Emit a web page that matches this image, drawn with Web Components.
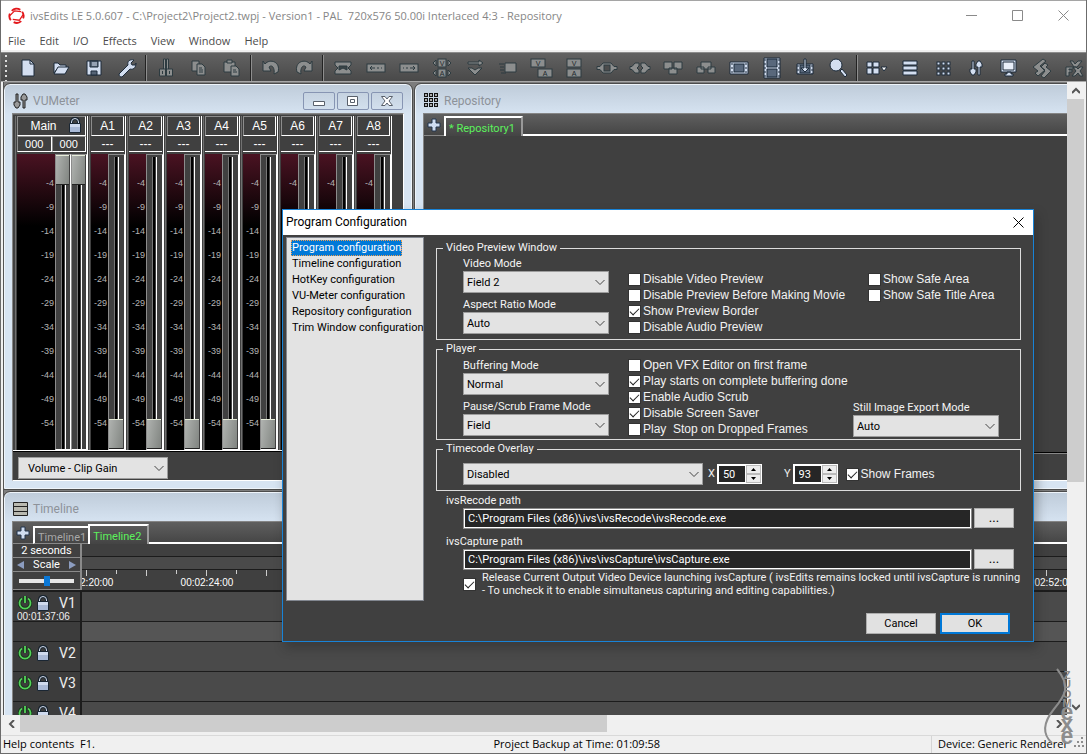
<!DOCTYPE html>
<html lang="en">
<head>
<meta charset="utf-8">
<title>ivsEdits LE</title>
<style>
html,body{margin:0;height:100%;overflow:hidden;background:#f0f0f0}
body{font:11px/16px "Open Sans",sans-serif;color:#000}
</style>
</head>
<body>
<edit-app></edit-app>
<script>
const define = (name, css, html, setup) => customElements.define(name, class extends HTMLElement {
  connectedCallback() {
    if (this.shadowRoot) return;
    const root = this.attachShadow({mode: 'open'});
    const t = document.createElement('template');
    t.innerHTML = `<style>*{box-sizing:border-box}${css}</style>` + (typeof html === 'function' ? html(this) : html);
    root.append(t.content.cloneNode(true));
    if (setup) setup(this, root);
  }
});

/* Toolbar glyphs, drawn round the origin in a 28px box */
const strip = (w, h, body) => `<rect x="${-w/2}" y="${-h/2}" width="${w}" height="${h}"/>${body}`;
const letterBox = (x, y, c) => `<rect x="${x}" y="${y}" width="14" height="8"/><text x="${x+7}" y="${y+7}">${c}</text>`;
const ICONS = {
  new: '<path d="M-6-8H2L6-4V8H-6Z"/><path d="M2-8V-4H6" fill="none"/>',
  open: '<path d="M-7 5V-5H-3L-1-3H5V0H-3Z"/><path d="M-7 6L-3-1H8L4 6Z"/>',
  save: '<path d="M-7-7H7V7H-7Z"/><path d="M-4-7H4V-1H-4ZM-3 3H3V7H-3Z" fill="#566476"/><path d="M-2-5H3M-2-3H3" stroke="#d5dff0"/>',
  wrench: '<path d="M-8 6L1-3C0-7 3-9 7-8L4-5L5-3L8-3L9-5C9 0 6 2 3 1L-5 9C-7 9-8 8-8 6Z"/>',
  cut: '<path d="M-2.500-9H-.5V2H-2.500ZM.5-9H2.500V2H.5Z"/><path d="M-6.500 1H-.5V8H-6.500ZM.5 1H6.500V8H.5ZM-3.500 3V6M3.500 3V6"/>',
  copy: '<path d="M-7-7H0V3H-7Z"/><path d="M-2-4H3L6-1V7H-2Z"/><path d="M0 0H3M0 2H4M0 4H4"/>',
  paste: '<path d="M-8-6H3V4H-8Z"/><path d="M-5-8H0V-5H-5Z"/><path d="M-1-2H4L7 1V8H-1Z"/><path d="M1 2H4M1 4H5"/>',
  undo: '<path d="M-8-7L-6-4C-1-10 10-6 7 4L3 6C4 0 1-4-2-1L0 3H-8Z"/>',
  redo: '<path d="M8-7L6-4C1-10-10-6-7 4L-3 6C-4 0-1-4 2-1L0 3H8Z"/>',
  clip: '<path d="M-8-6H8V-3L5 0L8 3V6H-8V3L-5 0L-8-3Z"/><path d="M-4-2H4V2L0 0L-4 2Z" fill="#3b4447"/>',
  left: strip(18, 8, '<path d="M-4-2L-6 0L-4 2M-6 0H-1M1 0H3M5 0H6"/>'),
  right: strip(18, 8, '<path d="M4-2L6 0L4 2M6 0H1M-1 0H-3M-5 0H-6"/>'),
  vaSwap: '<rect x="-4" y="-9" width="8" height="8"/><rect x="-4" y="1" width="8" height="8"/><text y="-2">V</text><text y="8">A</text><path d="M-6-8V-2L-9-5ZM6-8V-2L9-5ZM-6 2V8L-9 5ZM6 2V8L9 5Z"/>',
  down: '<path d="M-7-6H4V-8L8-5L4-2V-4H-7Z"/><path d="M-7 0H-3L0 2L3 0H7L0 7Z"/>',
  hand: '<path d="M-3-5H8V4H-3Z"/><path d="M-9-4H-4M-8-1H-4M-8 2H-4M-7 5H-2"/>',
  vaStep: letterBox(-10, -9, 'V') + letterBox(-3, 1, 'A'),
  vaStack: letterBox(-7, -9, 'V') + letterBox(-7, 1, 'A'),
  join: '<path d="M-10-1.500H-7L-4-5H4L7-1.500H10V1.500H7L4 5H-4L-7 1.500H-10Z"/><rect x="-3" y="-3" width="6" height="6" fill="#4c4c4c"/>',
  split: '<path d="M-10-1.500H-8L-5-5H-1V-2L-3 0L-1 2V5H-5L-8 1.500H-10ZM10-1.500H8L5-5H1V-2L3 0L1 2V5H5L8 1.500H10Z"/>',
  low: '<path d="M-9-6H-1V1H-9ZM1-6H9V1H1ZM-4 0H4V6H-4Z"/>',
  high: '<path d="M-9-1H-2V5H-9ZM2-1H9V5H2ZM-5-6H5V1H-5Z"/>',
  film: '<path d="M-9-6H9V6H-9Z"/><rect x="-5" y="-4" width="10" height="8" fill="#59687c"/><path d="M-7-5V6M7-5V6" stroke-dasharray="2 2"/>',
  film2: '<path d="M-8-10H8V10H-8Z"/><path d="M-5-9H5V-1H-5ZM-5 1H5V9H-5Z" fill="#59687c"/><path d="M-7-9V10M7-9V10" stroke-dasharray="2 2"/>',
  import: '<path d="M-8-4H8V6H-8Z"/><rect x="-5" y="-3" width="10" height="8" fill="#59687c"/><path d="M-7-3V6M7-3V6" stroke-dasharray="2 2"/><path d="M-1-9H1V0H4L0 4L-4 0H-1Z"/>',
  zoom: '<path d="M2 3L4 1L9 7L7 9Z"/><circle cx="-2" cy="-3" r="6"/>',
  grid4: '<path d="M-10-6H-5V-1H-10ZM-4-6H2V-1H-4ZM-10 0H-5V6H-10ZM-4 0H2V6H-4Z"/><path d="M4-1H10L7 3Z" fill="#fff"/>',
  rows: '<path d="M-7-7H7V-3H-7ZM-7-2H7V2H-7ZM-7 3H7V7H-7Z"/>',
  dots: [-6,-1,4].map(y => [-6,-1,4].map(x => `<rect x="${x}" y="${y}" width="3" height="3"/>`).join('')).join(''),
  mixer: '<path d="M-4-7H-2V1H0V4L-2 7H-4L-6 4V1H-4ZM2 7H4V-1H6V-4L4-7H2L0-4V-1H2Z"/>',
  monitor: '<path d="M-8-8H7V4H-8ZM-2 4H2V6H4V8H-4V6H-2Z"/><path d="M-6-6H5V2H-6Z" fill="#e9effa"/>',
  loop: '<path d="M1-9L-9-1L-4 3L-7 5L-4 8L3 2L-2-2L4-7ZM3-5L-1-1L3 3L-1 8L2 10L9 3L4-1L6-3Z"/>',
  vfx: '<path d="M-5-7H-2L0-4L3-7H7L2-1H-1ZM-9-1H-2V1H-6V2H-3V4H-6V8H-9ZM-2-1H1L3 1L5-1H8L5 3L8 8H5L3 5L0 8H-3L1 3Z"/>'
};
define('tool-icon', `
:host{display:block;width:33px;height:28px;flex:none}
button{all:unset;display:block;width:33px;height:28px}
svg{display:block;margin:auto;overflow:visible}
g{fill:#d3def0;stroke:#1d2b3a;stroke-width:1}
:host([off]) g{fill:#8c8e8e;stroke:#2d3b40}
text{font:7px "Liberation Sans",sans-serif;text-anchor:middle;stroke:none;fill:#20282b}`,
el => `<button type="button" aria-label="${el.getAttribute('name')}"><svg width="28" height="28" viewBox="-14 -15 28 28" aria-hidden="true"><g>${ICONS[el.getAttribute('name')]}</g></svg></button>`);

define('title-bar', `
:host{display:flex;align-items:center;height:29px;padding-left:7px;background:#fff;color:#868686}
.logo{margin-right:5px;flex:none}
h1{font:inherit;margin:0;white-space:pre;flex:1}
.sys{display:flex}
.sys button{all:unset;width:46px;height:28px;display:flex;align-items:center;justify-content:center}
.sys path{fill:none;stroke:#8a8a8a}`,
`<svg class="logo" width="17" height="17" viewBox="-9 -9 18 18" fill="none" stroke="#e3171b" stroke-width="2">
<path d="M-5-5A7 7 0 0 1 4-6M6-4A7 7 0 0 1 7 3M5 6A7 7 0 0 1-3 7M-6 5A7 7 0 0 1-7-2"/><path d="M-7 0L-2-5L5-4M7-1L3 5L-4 4" stroke-width="1.3"/></svg>
<h1><slot></slot></h1>
<div class="sys"><button aria-label="Minimize"><svg width="11" height="11"><path d="M0 5.500H11"/></svg></button>
<button aria-label="Maximize"><svg width="11" height="11"><path d="M.5 .5H10.500V10.500H.5Z"/></svg></button>
<button aria-label="Close"><svg width="11" height="11"><path d="M.5 .5L10.500 10.500M10.500 .5L.5 10.500"/></svg></button></div>`);

define('menu-bar', `
:host{display:block;height:20px;background:#fff;color:#4c4c4c}
nav{display:flex;gap:14px;padding:2px 7px 0}
a{color:inherit;text-decoration:none;line-height:18px}`,
`<nav>${['File','Edit','I/O','Effects','View','Window','Help'].map(m => `<a href="#">${m}</a>`).join('')}</nav>`);

const group = (list, off) => list.split(' ').map(n => `<tool-icon name="${n}"${off ? ' off' : ''}></tool-icon>`).join('');
define('tool-bar', `
:host{display:flex;height:29px;padding-left:4px;overflow:hidden;border-bottom:1px solid #a8a8a8;background:linear-gradient(#626262,#494949)}
.grip{width:2px;margin:2px 4px 0 0;flex:none;background:repeating-linear-gradient(#ddd 0 2px,transparent 2px 5px)}
hr{flex:none;width:2px;height:26px;margin:2px 2px 0 2px;border:0;border-left:1px solid #222;background:#8e8e8e}`,
`<span class="grip"></span>${group('new open save wrench')}<hr>${group('cut copy paste', 1)}<hr>${group('undo redo', 1)}<hr>${group('clip left right vaSwap down hand vaStep vaStack join split low high', 1)}${group('film film2 import zoom')}<hr>${group('grid4 rows dots mixer monitor')}${group('loop vfx', 1)}`);

define('mdi-window', `
:host{display:flex;flex-direction:column;min-width:0;min-height:0;border:1px solid #eef4fa;outline:1px solid #4c4c4c;border-radius:6px 6px 0 0;padding:0 7px 7px;background:linear-gradient(#bfccda,#d7e4f2 30px)}
header{display:flex;align-items:center;height:28px;flex:none;padding:3px 1px 0 1px;color:#8d9299;font:12px/16px Roboto,sans-serif}
h2{font:inherit;margin:0 0 0 5px;flex:1}
.body{flex:1;display:flex;flex-direction:column;min-height:0;border:1px solid #858585;border-right-color:#fff;border-bottom-color:#fff;background:#404040;color:#fff;overflow:hidden}`,
`<header><slot name="icon"></slot><h2><slot name="title"></slot></h2><slot name="controls"></slot></header><div class="body"><slot></slot></div>`);

define('window-controls', `
:host{display:flex;gap:2px}
button{all:unset;width:30px;height:16px;border:1px solid #8795b3;border-radius:2px;display:flex;align-items:center;justify-content:center}
svg{display:block;fill:#fff;stroke:#59606b}`,
`<button aria-label="Minimize"><svg width="12" height="12"><path d="M.5 6.500H11.500V10.500H.5Z"/></svg></button>
<button aria-label="Restore"><svg width="12" height="12"><path d="M.5 1.500H10.500V10.500H.5Z"/><path d="M3.500 4.500H7.500V7.500H3.500Z"/></svg></button>
<button aria-label="Close"><svg width="12" height="12"><path d="M.5 1.500H4L6 4L8 1.500H11.500L8 6L11.500 10.500H8L6 8L4 10.500H.5L4 6Z"/></svg></button>`);

const LOCK = '<svg width="14" height="16" viewBox="0 0 14 16"><path d="M3.500 8V5Q3.500 1.500 7 1.500T10.500 5V8" fill="none" stroke="#16222e" stroke-width="3"/><path d="M3.500 7V5Q3.500 1.500 7 1.500T10.500 5V7" fill="none" stroke="#d5dff0"/><path d="M1.500 6.500H12.500V15.500H1.500Z" fill="#a9b9d6" stroke="#1a2633"/><path d="M2 7H12V10H2Z" fill="#cfdaee"/></svg>';

define('vu-fader', `
:host{display:flex;flex-direction:column;position:relative;flex:1;border:1px solid #8c8c8c;border-right-color:#fff;border-bottom-color:#fff;background:#404040}
.slot{flex:1;width:5px;margin:2px auto 0;border-left:1px solid #777;background:linear-gradient(90deg,#000 2px,#404040 2px 3px,#fff 3px)}
.cap{position:absolute;left:0;right:1px;height:30px;top:0;border-top:1px solid #e6ecd8;border-bottom:1px solid #222;background:linear-gradient(100deg,#b0b3b0,#808480)}
:host([low]) .cap{top:auto;bottom:0}`,
`<span class="slot"></span><span class="cap"></span>`);

define('vu-channel', `
:host{display:flex;flex-direction:column;width:37px;flex:none;padding-left:1px;border-left:1px solid #707070;border-right:1px solid #fff;font:12px/18px "Liberation Sans",sans-serif}
:host([main]){width:73px}
.name{display:flex;height:20px;border:1px solid #8c8c8c;border-right-color:#fff;border-bottom-color:#fff;justify-content:center;margin-right:1px}
.name svg{margin:0 -4px 0 11px}
:host([main]) .name{padding-left:5px}
.vals{display:flex;height:16px;margin-right:1px;line-height:16px}
.vals span{flex:1;text-align:center;border-bottom:1px solid #fff}
:host([main]) .vals span{border:1px solid #8c8c8c;border-right-color:#fff;border-bottom-color:#fff;line-height:14px;font-size:11px}
.meter{display:flex;flex:1;margin-top:2px;background:linear-gradient(#4a1322,#000 72px)}
ol{list-style:none;margin:0;padding:17px 1px 0 0;width:17px;flex:none;font:9px/24px "Liberation Sans",sans-serif;color:#b4b4b4;white-space:nowrap}
:host([main]) ol{width:38px}
li{display:flex;justify-content:flex-end}`,
el => {
  const main = el.hasAttribute('main');
  const scale = Array.from({length: +(el.getAttribute('marks') || 11)}, (_, i) => `<li>-${4 + i * 5}</li>`).join('');
  return `<div class="name">${el.getAttribute('label')}${main ? LOCK : ''}</div>
<div class="vals">${main ? '<span>000</span><span>000</span>' : '<span>---</span>'}</div>
<div class="meter"><ol>${scale}</ol>${main ? '<vu-fader></vu-fader><vu-fader></vu-fader>' : '<vu-fader low></vu-fader>'}</div>`;
});

define('combo-box', `
:host{display:block;position:relative;font:11px/15px Roboto,sans-serif}
label{display:block;height:15px;color:#f4f4f4}
.box{position:relative}
select{appearance:none;display:block;width:100%;height:22px;margin:0;padding:0 3px;border:1px solid #9d9d9d;border-radius:0;background:#e3e3e3;color:#000;font:inherit}
:host([wide]) select{padding:0 9px}
svg{position:absolute;right:4px;top:8px;fill:none;stroke:#444;pointer-events:none}`,
el => {
  const l = el.getAttribute('label');
  return `${l ? `<label for="s">${l}</label>` : ''}<div class="box"><select id="s" aria-label="${l || el.getAttribute('hint')}"><option>${el.getAttribute('value')}</option></select><svg width="10" height="7"><path d="M.5 1L5 5.500L9.500 1"/></svg></div>`;
});

define('vu-panel', `
:host{display:flex;flex-direction:column;flex:1}
.channels{display:flex;gap:1px;flex:1;padding:1px 0 0 2px;border-top:1px solid #606060;border-bottom:1px solid #fff}
footer{border-top:1px solid #000;padding:5px 5px 1px}
combo-box{width:150px}`,
`<div class="channels"><vu-channel main label="Main"></vu-channel>${[1,2,3,4,5,6,7,8].map(n => `<vu-channel label="A${n}" marks="${n > 5 ? 1 : 11}"></vu-channel>`).join('')}</div>
<footer><combo-box wide hint="Control mode" value="Volume - Clip Gain"></combo-box></footer>`);

const PLUS = '<svg width="14" height="14"><path d="M5 1H9V5H13V9H9V13H5V9H1V5H5Z" fill="#cfdcf0" stroke="#22344c"/></svg>';
define('tab-strip', `
:host{display:flex;height:22px;flex:none;background:linear-gradient(#5f5f5f,#444)}
.add{all:unset;width:20px;display:flex;align-items:center;justify-content:center;border-bottom:1px solid #888}
.tabs{display:flex;align-items:flex-end;flex:none}
.tabs button{all:unset;box-sizing:border-box;height:18px;padding:2px 2px 0 3px;border:2px solid #fff;border-right:0;border-bottom:1px solid #888;color:#a8a8a8;font:11px/15px Roboto,sans-serif}
.tabs button.on{height:20px;color:#5cf25c;border-right:2px solid #999;padding-right:6px;padding-left:3px;border-bottom:0}
.rest{flex:1;border-bottom:2px solid #fff}
svg{display:block}`,
el => `<button class="add" aria-label="Add tab">${PLUS}</button><div class="tabs">${el.getAttribute('tabs').split('|').map((t, i, a) => `<button class="${i === a.length - 1 ? 'on' : ''}">${t}</button>`).join('')}</div><span class="rest"></span>`);

define('repository-panel', `
:host{display:flex;flex-direction:column;flex:1}
.items{flex:1;border-bottom:1px solid #000}
.foot{height:27px;border-top:1px solid #888}`,
`<tab-strip tabs="* Repository1"></tab-strip><div class="items"></div><div class="foot"></div>`);

define('track-row', `
:host{display:flex;flex:none;height:30px}
.head{display:grid;grid-template-columns:20px 16px 1fr;align-content:start;align-items:center;width:69px;flex:none;padding:2px 0 0 2px;background:#3c3c3c;border-right:2px solid #1c1c1c;border-bottom:1px solid #1c1c1c}
.lane{flex:1;background:#4a4a4a;border-bottom:1px solid #1c1c1c}
.head svg{display:block;margin:auto}
b{font:14px/18px Roboto,sans-serif;padding-left:8px;color:#eee}
time{grid-column:1/4;font:10px/10px "Liberation Sans",sans-serif;margin-left:2px;color:#eee;white-space:nowrap}
:host([sub]) .head svg,:host([sub]) b{display:none}
:host([sub]){height:20px}
:host([sub]) .lane{background:#555}`,
el => `<div class="head"><svg width="14" height="16" viewBox="0 0 14 16" fill="none" stroke="#16361a" stroke-width="3.500"><path d="M4 3.500A5.500 5.500 0 1 0 10 3.500M7 1V8"/><path d="M4 3.500A5.500 5.500 0 1 0 10 3.500M7 1V8" stroke="#55d35a" stroke-width="1.800"/></svg>${LOCK}<b>${el.getAttribute('name') || ''}</b>${el.hasAttribute('time') ? `<time>${el.getAttribute('time')}</time>` : ''}</div><div class="lane"></div>`);

define('time-line', `
:host{display:flex;flex-direction:column;flex:1;overflow:hidden}
.top{display:flex;flex:none;height:48px;border-bottom:2px solid #1c1c1c}
.scale{width:69px;flex:none;border-right:2px solid #8a8a8a;text-align:center;font:11px/13px Roboto,sans-serif}
.scale>*{border-bottom:1px solid #8a8a8a}
.step{display:flex;justify-content:space-between;align-items:center;height:14px;padding:0 3px}
.step button{all:unset;display:flex}
.track{height:18px;display:flex;align-items:center;padding:0 6px}
input{appearance:none;width:100%;height:4px;margin:0;background:#e7e7e7}
input::-webkit-slider-thumb{appearance:none;width:6px;height:10px;background:#0a78d7}
.ruler{flex:1;overflow:hidden;display:flex;flex-direction:column}
.bar{height:13px;flex:none;border-bottom:1px solid #1c1c1c}
.bar.b{background:#4a4a4a}
.times{display:flex;flex:1;margin-left:-55px;font:10px/12px "Liberation Sans",sans-serif}
.times span{width:120px;flex:none;text-align:center;padding-top:7px;background:linear-gradient(#ccc,#ccc) 59px 0/1px 6px no-repeat,linear-gradient(#ccc,#ccc) 89px 0/1px 4px no-repeat,linear-gradient(#ccc,#ccc) 119px 0/1px 6px no-repeat,linear-gradient(#ccc,#ccc) 29px 0/1px 4px no-repeat}`,
`<tab-strip tabs="Timeline1|Timeline2"></tab-strip>
<div class="top"><div class="scale"><div>2 seconds</div><div class="step"><button aria-label="Zoom out"><svg width="9" height="10"><path d="M8 1V9L1 5Z" fill="#8c9dc0"/></svg></button>Scale<button aria-label="Zoom in"><svg width="9" height="10"><path d="M1 1V9L8 5Z" fill="#8c9dc0"/></svg></button></div>
<div class="track"><input type="range" aria-label="Scale" value="50"></div></div>
<div class="ruler"><div class="bar"></div><div class="bar b"></div><div class="times">${['00:02:20:00','00:02:24:00','','','','','','','00:02:52:00'].map(s => `<span>${s}</span>`).join('')}</div></div></div>
<track-row name="V1" time="00:01:37:06"></track-row><track-row sub></track-row><track-row name="V2"></track-row><track-row name="V3"></track-row><track-row name="V4"></track-row>`);

define('scroll-bar', `
:host{display:flex;background:#f0f0f0;width:17px;flex-direction:column}
:host([horizontal]){width:auto;height:17px;flex-direction:row}
button{all:unset;width:17px;height:17px;flex:none;display:flex;align-items:center;justify-content:center}
svg{fill:none;stroke:#555;stroke-width:2}
.track{flex:1;display:flex;flex-direction:inherit}
.thumb{background:#cdcdcd}`,
el => {
  const h = el.hasAttribute('horizontal');
  const a = h ? ['M6 0L2 4L6 8', 'M2 0L6 4L2 8'] : ['M0 6L4 2L8 6', 'M0 2L4 6L8 2'];
  return `<button aria-label="Back"><svg width="8" height="8"><path d="${a[0]}"/></svg></button><div class="track"><div class="thumb" style="flex-basis:${el.getAttribute('size')}%"></div></div><button aria-label="Forward"><svg width="8" height="8"><path d="${a[1]}"/></svg></button>`;
});

define('status-bar', `
:host{display:flex;height:18px;border-top:1px solid #d9d9d9;background:#f0f0f0;line-height:16px;white-space:pre}
span{padding-left:2px}
.a{flex:490}.b{flex:439;border-right:1px solid #d5d5d5}.c{flex:0 0 154px;padding-left:6px}`,
`<span class="a">Help contents  F1.</span><span class="b">Project Backup at Time: 01:09:58</span><span class="c">Device: Generic Renderer</span>`);

define('water-mark', `
:host{position:absolute;right:2px;bottom:4px;width:40px;height:80px;pointer-events:none}
svg{display:block;overflow:visible}
path{fill:none;stroke:#8d8d8d;stroke-width:2}
text{font:bold 11px "Liberation Sans",sans-serif;fill:#8d8d8d;text-anchor:middle}
.mid{font-size:23px;font-weight:bold}`,
`<svg width="40" height="80" viewBox="0 0 40 80"><path d="M13 0C28 18 20 28 10 40C-2 55-1 66 8 74"/><path d="M30 77h10M33 73h7M37 69h3" stroke-dasharray="2 2"/>
<text x="23" y="10">Z</text><text x="23" y="19">U</text><text x="23" y="29">O</text><text x="23" y="38">M</text>
<text class="mid" x="23" y="51">e</text><text class="mid" x="23" y="63">x</text><text class="mid" x="23" y="75">e</text></svg>`);

define('check-box', `
:host{display:block}
label{display:flex;align-items:center;gap:2px;height:16px;font:12px/16px "Liberation Sans",sans-serif;color:#f2f2f2;white-space:pre}
input{appearance:none;width:13px;height:13px;margin:0;flex:none;background:#fff;border:1px solid #333;display:grid;place-items:center}
input:checked::before{content:"";width:8px;height:4px;margin-top:-2px;border-left:1px solid #222;border-bottom:1px solid #222;transform:rotate(-45deg)}
:host([note]) label{height:26px;gap:6px;font:11px/13px Roboto,sans-serif}`,
el => `<label><input type="checkbox"${el.hasAttribute('checked') ? ' checked' : ''}><span><slot></slot></span></label>`);

define('group-box', `
:host{display:block}
fieldset{margin:0;padding:0;border:1px solid #dcdcdc;min-width:0}
legend{margin-left:6px;padding:0 3px;height:14px;font:11px/14px Roboto,sans-serif;color:#f4f4f4}`,
el => `<fieldset><legend>${el.getAttribute('label')}</legend><slot></slot></fieldset>`);

define('spin-box', `
:host{display:flex;font:11px/15px Roboto,sans-serif}
label{color:#eee;margin-right:2px;line-height:20px}
input{width:28px;height:20px;margin:0;padding:0 4px;border:2px solid #fff;border-right:0;background:#262626;color:#fff;font:inherit}
.arrows{display:flex;flex-direction:column;width:17px;height:20px;background:#ededed;border:1px solid #fff}
button{all:unset;flex:1;display:grid;place-items:center;border:1px solid #bbb}
svg{display:block}`,
el => `<label for="v">${el.getAttribute('label')}</label><input id="v" value="${el.getAttribute('value')}"><span class="arrows"><button aria-label="Up"><svg width="5" height="3"><path d="M0 3L2.500 0L5 3Z"/></svg></button><button aria-label="Down"><svg width="5" height="3"><path d="M0 0L2.500 3L5 0Z"/></svg></button></span>`);

define('path-field', `
:host{display:block;font:11px/15px Roboto,sans-serif}
label{display:block;margin-left:10px;color:#f4f4f4}
.row{display:flex;gap:2px;padding:0 7px 0 27px}
input{flex:1;min-width:0;height:21px;margin:0;padding:0 4px;border:1px solid #8a8a8a;box-shadow:inset 0 0 0 1px #fff;background:#262626;color:#fff;font:inherit}
button{width:40px;height:20px;margin:0;padding:0;border:1px solid #adadad;background:#e1e1e1;font:13px/16px Roboto,sans-serif;color:#000}`,
el => `<label for="p">${el.getAttribute('label')}</label><div class="row"><input id="p" value="${el.getAttribute('value')}"><button aria-label="Browse">...</button></div>`);

define('config-dialog', `
:host{position:absolute;left:281px;top:209px;width:752px;display:flex;flex-direction:column;border:1px solid #1883d7;background:#404040;box-shadow:3px 6px 10px rgba(30,30,30,.35)}
header{display:flex;align-items:center;height:25px;background:#fff;padding:0 9px 1px 3px}
h2{font:12px/16px Roboto,sans-serif;margin:0;flex:1}
header button{all:unset;display:flex}
.body{display:flex;gap:12px;padding:2px 12px 7px 3px}
ul{list-style:none;margin:0;padding:2px 4px;width:138px;height:364px;flex:none;border:1px solid #828790;background:#e3e3e3;font:11px/16px Roboto,sans-serif;white-space:nowrap}
li span{padding:1px 1px}
li.on span{display:inline-block;padding:0;line-height:14px;border:1px dotted #f0a050;background:#0078d7;color:#fff}
main{flex:1;min-width:0;padding-top:4px;display:flex;flex-direction:column;gap:2px}
.g{display:grid;column-gap:19px;padding:1px 0 4px 26px}
.g.p{grid-template-columns:146px 206px 146px;padding-bottom:2px}
.g.v{grid-template-columns:146px 221px 1fr}
.combos{display:grid;gap:4px;align-content:start}
.p .combos{padding-top:1px}
.v .checks{padding-top:15px}
.end{align-self:end}
.t{display:flex;align-items:center;padding:7px 0 5px 26px}
.t combo-box{width:240px;margin-right:5px}
.t spin-box{margin-right:22px}
.t spin-box+spin-box{margin-right:8px}
.paths{display:grid;gap:5px}
.note{margin:-1px 0 0 27px}
.buttons{display:flex;justify-content:flex-end;gap:4px;padding:14px 11px 0 0}
.buttons button{width:70px;height:21px;margin:0;padding:0;border:1px solid #adadad;background:#e1e1e1;color:#000;font:11px/16px Roboto,sans-serif}
.buttons .ok{border:2px solid #0078d7}`,
`<header><h2>Program Configuration</h2><button aria-label="Close"><svg width="11" height="11" fill="none" stroke="#000"><path d="M.5 .5L10.500 10.500M10.500 .5L.5 10.500"/></svg></button></header>
<div class="body"><ul>${['Program','Timeline','HotKey','VU-Meter','Repository','Trim Window'].map((n, i) => `<li class="${i ? '' : 'on'}"><span>${n} configuration</span></li>`).join('')}</ul>
<main>
<group-box label="Video Preview Window"><div class="g v"><div class="combos"><combo-box label="Video Mode" value="Field 2"></combo-box><combo-box label="Aspect Ratio Mode" value="Auto"></combo-box></div>
<div class="checks"><check-box>Disable Video Preview</check-box><check-box>Disable Preview Before Making Movie</check-box><check-box checked>Show Preview Border</check-box><check-box>Disable Audio Preview</check-box></div>
<div class="checks"><check-box>Show Safe Area</check-box><check-box>Show Safe Title Area</check-box></div></div></group-box>
<group-box label="Player"><div class="g p"><div class="combos"><combo-box label="Buffering Mode" value="Normal"></combo-box><combo-box label="Pause/Scrub Frame Mode" value="Field"></combo-box></div>
<div class="checks"><check-box>Open VFX Editor on first frame</check-box><check-box checked>Play starts on complete buffering done</check-box><check-box checked>Enable Audio Scrub</check-box><check-box checked>Disable Screen Saver</check-box><check-box>Play  Stop on Dropped Frames</check-box></div>
<combo-box class="end" label="Still Image Export Mode" value="Auto"></combo-box></div></group-box>
<group-box label="Timecode Overlay"><div class="t"><combo-box hint="Timecode overlay" value="Disabled"></combo-box><spin-box label="X" value="50"></spin-box><spin-box label="Y" value="93"></spin-box><check-box checked>Show Frames</check-box></div></group-box>
<div class="paths"><path-field label="ivsRecode path" value="C:\\Program Files (x86)\\ivs\\ivsRecode\\ivsRecode.exe"></path-field><path-field label="ivsCapture path" value="C:\\Program Files (x86)\\ivs\\ivsCapture\\ivsCapture.exe"></path-field></div>
<check-box class="note" note checked>Release Current Output Video Device launching ivsCapture ( ivsEdits remains locked until ivsCapture is running
- To uncheck it to enable simultaneus capturing and editing capabilities.)</check-box>
<div class="buttons"><button>Cancel</button><button class="ok">OK</button></div>
</main></div>`);

define('edit-app', `
:host{display:flex;flex-direction:column;height:100vh;position:relative;border:solid #6b6b6b;border-width:0 1px 1px;overflow:hidden;background:#f0f0f0;box-sizing:border-box}
.behind{height:1px;flex:none;background:#a5a5a5}
.rule{height:3px;flex:none;background:#f0f0f0;border-bottom:1px solid #8c8c8c}
tool-bar{flex:none}
.work{flex:1;display:grid;grid-template-columns:1fr 17px;grid-template-rows:1fr 17px;min-height:0;padding:0 2px 3px 2px}
.desk{display:grid;grid-template-columns:408px 1fr;grid-template-rows:405px 1fr;gap:3px;min-width:0;min-height:0;overflow:hidden;background:#7d7d7d;border-left:1px solid #555;padding:2px 0 0}
.repo,.time{margin-right:-10px}
.time{grid-column:1/3;margin-bottom:-20px}
.desk svg{display:block}`,
`<div class="behind"></div>
<title-bar>ivsEdits LE 5.0.607 - C:\\Project2\\Project2.twpj - Version1 - PAL  720x576 50.00i Interlaced 4:3 - Repository</title-bar>
<menu-bar></menu-bar><div class="rule"></div><tool-bar></tool-bar>
<div class="work"><div class="desk">
<mdi-window class="vu"><svg slot="icon" width="15" height="16" fill="#999" stroke="#222"><path d="M3 1H5V9H7V12L5 15H3L1 12V9H3ZM10 15H12V7H14V4L12 1H10L8 4V7H10Z"/></svg><span slot="title">VUMeter</span><window-controls slot="controls"></window-controls><vu-panel></vu-panel></mdi-window>
<mdi-window class="repo"><svg slot="icon" width="15" height="15" fill="#aaa" stroke="#111">${[1,6,11].map(y => [1,6,11].map(x => `<rect x="${x - .5}" y="${y - .5}" width="3" height="3"/>`).join('')).join('')}</svg><span slot="title">Repository</span><repository-panel></repository-panel></mdi-window>
<mdi-window class="time"><svg slot="icon" width="15" height="14" fill="#b9b9b0" stroke="#222"><path d="M.5 .5H14.500V13.500H.5ZM0 4.500H15M0 9.500H15"/></svg><span slot="title">Timeline</span><time-line></time-line></mdi-window>
</div><scroll-bar size="64"></scroll-bar><scroll-bar horizontal size="57"></scroll-bar></div>
<status-bar></status-bar><config-dialog></config-dialog><water-mark></water-mark>`);
</script>
</body>
</html>
